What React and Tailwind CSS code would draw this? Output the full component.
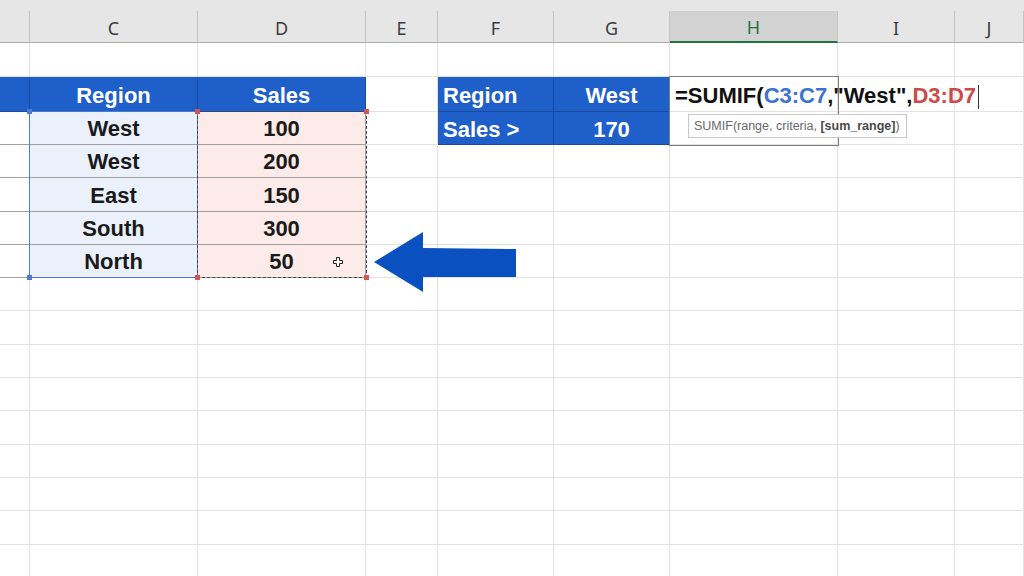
import React from "react";

const cols = [
  "w-[30px]",
  "w-[168px]",
  "w-[168px]",
  "w-[72px]",
  "w-[116px]",
  "w-[116px]",
  "w-[168px]",
  "w-[117px]",
  "w-[69px]",
];

function Cell({ i, bc = "border-[#e2e2e2]", className = "", children }) {
  return (
    <div
      className={`${cols[i]} shrink-0 h-full box-border border-r border-b ${bc} flex items-center ${className}`}
    >
      {children}
    </div>
  );
}

const BLUE = "bg-[#1f5fc9] text-white font-bold pt-[2px]";
const BLUE_BC = "border-[#1a4a9c]";
const DATA_BC = "border-[#a0a0a0]";

function HeaderRow() {
  const letters = ["", "C", "D", "E", "F", "G", "H", "I", "J"];
  return (
    <div className="flex h-[43px] bg-[#e6e6e6]">
      {letters.map((l, i) => (
        <div key={i} className={`${cols[i]} shrink-0 h-full flex flex-col`}>
          <div className="h-[11px]" />
          {l === "H" ? (
            <div className="flex-1 box-border bg-[#d2d2d2] border-r border-[#c4c4c4] border-b-2 border-b-[#217346] flex items-center justify-center pt-[3px] text-[18px] text-[#1f7244] font-['Noto_Sans',sans-serif]">
              {l}
            </div>
          ) : (
            <div className="flex-1 box-border border-r border-b border-[#c4c4c4] border-b-[#ababab] flex items-center justify-center pt-[3px] text-[18px] text-[#3c3c3c] font-['Noto_Sans',sans-serif]">
              {l}
            </div>
          )}
        </div>
      ))}
    </div>
  );
}

function EmptyRow({ h }) {
  return (
    <div className={`flex ${h}`}>
      {cols.map((_, i) => (
        <Cell key={i} i={i} />
      ))}
    </div>
  );
}

function DataRow({ h, region, sales, extra }) {
  return (
    <div className={`flex ${h}`}>
      <Cell i={0} bc={DATA_BC} />
      <Cell i={1} bc={DATA_BC} className="bg-[#eaf1fb] justify-center pt-px text-[22px] font-bold text-[#1a1a1a]">
        {region}
      </Cell>
      <Cell i={2} bc={DATA_BC} className="bg-[#fcebe8] justify-center pt-px text-[22px] font-bold text-[#1a1a1a]">
        {sales}
      </Cell>
      <Cell i={3} />
      {extra ? (
        extra
      ) : (
        <>
          <Cell i={4} />
          <Cell i={5} />
        </>
      )}
      <Cell i={6} />
      <Cell i={7} />
      <Cell i={8} />
    </div>
  );
}

function Corner({ className }) {
  return <div className={`absolute w-[5px] h-[5px] ${className}`} />;
}

export default function App() {
  const emptyHeights = [
    "h-[33px]",
    "h-[34px]",
    "h-[33px]",
    "h-[33px]",
    "h-[34px]",
    "h-[33px]",
    "h-[33px]",
    "h-[34px]",
    "h-[33px]",
  ];
  return (
    <div className="relative w-[1024px] h-[576px] overflow-hidden bg-white font-['Liberation_Sans',Arial,sans-serif]">
      <HeaderRow />
      <EmptyRow h="h-[34px]" />

      {/* Row 2: headers */}
      <div className="flex h-[35px]">
        <Cell i={0} bc={BLUE_BC} className={BLUE} />
        <Cell i={1} bc={BLUE_BC} className={`${BLUE} justify-center text-[22px]`}>
          Region
        </Cell>
        <Cell i={2} bc={BLUE_BC} className={`${BLUE} justify-center text-[22px]`}>
          Sales
        </Cell>
        <Cell i={3} />
        <Cell i={4} bc={BLUE_BC} className={`${BLUE} pl-[5px] text-[22px]`}>
          Region
        </Cell>
        <Cell i={5} bc={BLUE_BC} className={`${BLUE} justify-center text-[22px]`}>
          West
        </Cell>
        <Cell i={6} className="pl-[5px] pt-[2px]">
          <span className="relative z-10 whitespace-nowrap text-[22px] font-bold text-[#111]">
            =SUMIF(<span className="text-[#3b74cf]">C3:C7</span>,"West",
            <span className="text-[#cc4a47]">D3:D7</span>
            <span className="inline-block w-px h-[24px] bg-[#333] align-middle ml-[2px]" />
          </span>
        </Cell>
        <Cell i={7} />
        <Cell i={8} />
      </div>

      <DataRow
        h="h-[33px]"
        region="West"
        sales="100"
        extra={
          <>
            <Cell i={4} bc={BLUE_BC} className={`${BLUE} pl-[5px] text-[22px]`}>
              Sales &gt;
            </Cell>
            <Cell i={5} bc={BLUE_BC} className={`${BLUE} justify-center text-[22px]`}>
              170
            </Cell>
          </>
        }
      />
      <DataRow h="h-[33px]" region="West" sales="200" />
      <DataRow h="h-[34px]" region="East" sales="150" />
      <DataRow h="h-[33px]" region="South" sales="300" />
      <DataRow h="h-[33px]" region="North" sales="50" />

      {emptyHeights.map((h, k) => (
        <EmptyRow key={k} h={h} />
      ))}

      {/* Selection overlays */}
      <div className="absolute left-[29px] top-[111px] w-[169px] h-[167px] border border-[#4a7bd0] pointer-events-none" />
      <div className="absolute left-[197px] top-[111px] w-[170px] h-[167px] border border-dashed border-[#444] pointer-events-none" />
      <Corner className="left-[27px] top-[109px] bg-[#4a7bd0]" />
      <Corner className="left-[27px] top-[275px] bg-[#4a7bd0]" />
      <Corner className="left-[195px] top-[109px] bg-[#d9534f]" />
      <Corner className="left-[364px] top-[109px] bg-[#d9534f]" />
      <Corner className="left-[195px] top-[275px] bg-[#d9534f]" />
      <Corner className="left-[364px] top-[275px] bg-[#d9534f]" />

      {/* Edit box H2:H3 */}
      <div className="absolute left-[669px] top-[76px] w-[170px] h-[70px] border border-[#7d7d7d] pointer-events-none" />

      {/* Tooltip */}
      <div className="absolute left-[688px] top-[114px] w-[219px] h-[24px] bg-white border border-[#c8c8c8] flex items-center pl-[5px] text-[12.5px] text-[#6a6a6a] whitespace-nowrap">
        <span>
          SUMIF(range, criteria,{" "}
          <span className="font-bold text-[#4a4a4a]">[sum_range]</span>)
        </span>
      </div>

      {/* Cursor glyph */}
      <svg className="absolute left-[333px] top-[257px]" width="10" height="10" viewBox="0 0 10 10">
        <polygon
          points="3.5,0.5 6.5,0.5 6.5,3.5 9.5,3.5 9.5,6.5 6.5,6.5 6.5,9.5 3.5,9.5 3.5,6.5 0.5,6.5 0.5,3.5 3.5,3.5"
          fill="#fff"
          stroke="#222"
          strokeWidth="1"
        />
      </svg>

      {/* Arrow */}
      <svg className="absolute left-[374px] top-[232px]" width="143" height="61" viewBox="0 0 143 61">
        <polygon points="0,30 49,0 49,16 142,17 142,45 49,45 49,60" fill="#0b50c0" />
      </svg>
    </div>
  );
}
